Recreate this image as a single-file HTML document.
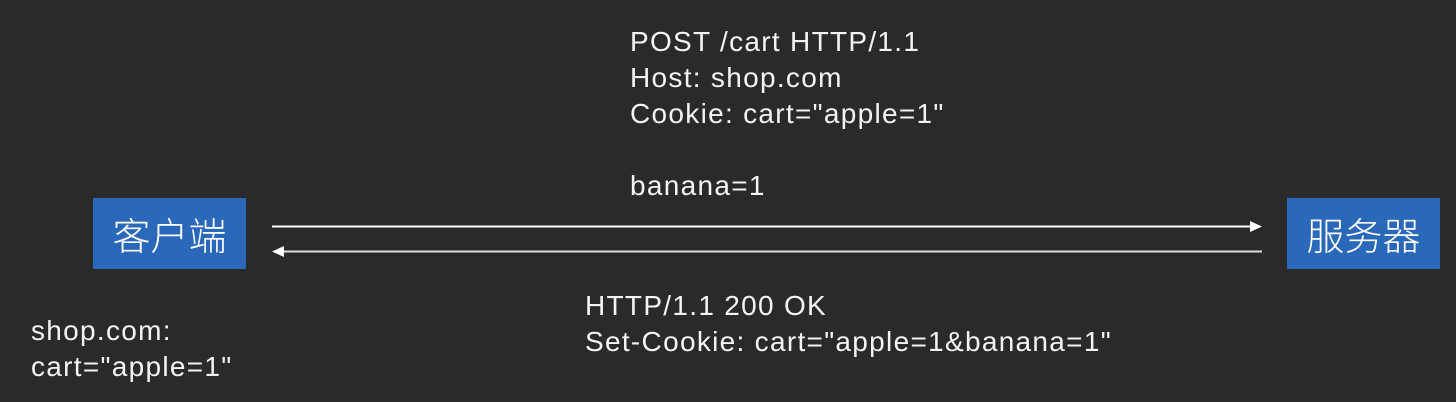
<!DOCTYPE html>
<html><head><meta charset="utf-8"><style>
html,body{margin:0;padding:0;}
body{width:1456px;height:402px;background:#2a2a2a;position:relative;overflow:hidden;font-family:"Liberation Sans","Noto Sans CJK SC",sans-serif;color:#f4f4f4;}
.t{position:absolute;font-size:28px;letter-spacing:1.3px;line-height:36px;white-space:pre;}
.box{position:absolute;background:#2a68b9;color:#fff;font-size:38px;text-align:center;line-height:71px;width:153px;height:71px;top:198px;font-family:"Noto Sans CJK SC",sans-serif;font-weight:300;}
</style></head><body>
<div class="t" style="left:630px;top:24px;">POST /cart HTTP/1.1
Host: shop.com
Cookie: cart="apple=1"

banana=1</div>
<div class="box" style="left:93px;">客户端</div>
<div class="box" style="left:1287px;">服务器</div>
<svg style="position:absolute;left:0;top:0" width="1456" height="402">
<line x1="272" y1="226.5" x2="1252" y2="226.5" stroke="#fff" stroke-width="2"/>
<polygon points="1262,226.5 1250,221 1250,232" fill="#fff"/>
<line x1="282" y1="251.5" x2="1262" y2="251.5" stroke="#ddd" stroke-width="2"/>
<polygon points="272,251.5 284,246 284,257" fill="#fff"/>
</svg>
<div class="t" style="left:585px;top:288px;">HTTP/1.1 200 OK
Set-Cookie: cart="apple=1&amp;banana=1"</div>
<div class="t" style="left:31px;top:313px;">shop.com:
cart="apple=1"</div>
</body></html>
